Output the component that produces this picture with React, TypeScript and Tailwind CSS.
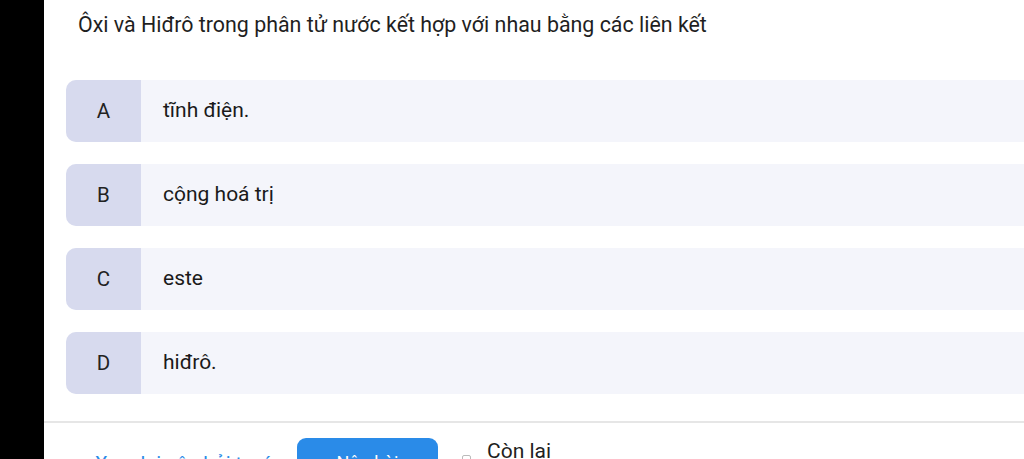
const options = [
  { key: "A", text: "tĩnh điện." },
  { key: "B", text: "cộng hoá trị" },
  { key: "C", text: "este" },
  { key: "D", text: "hiđrô." },
];

export default function App() {
  return (
    <div className="flex h-[459px] w-[1024px] overflow-hidden bg-black font-['Roboto',sans-serif]">
      <div className="w-[44px] shrink-0 bg-black" />
      <div className="flex flex-1 flex-col overflow-hidden bg-white">
        <p className="mt-[11px] shrink-0 pl-[34px] text-[21.4px] leading-[28px] text-[#1f1f1f]">
          Ôxi và Hiđrô trong phân tử nước kết hợp với nhau bằng các liên kết
        </p>

        <div className="mt-[41px] flex shrink-0 flex-col gap-[22px] pl-[22px]">
          {options.map((o) => (
            <div
              key={o.key}
              className="flex h-[62px] w-[1000px] shrink-0 items-center rounded-l-[10px] bg-[#f4f5fb]"
            >
              <div className="flex h-full w-[75px] items-center justify-center rounded-l-[10px] bg-[#d7daee] text-[20.5px] text-[#222]">
                {o.key}
              </div>
              <span className="pl-[22px] text-[21px] text-[#1a1a1a]">{o.text}</span>
            </div>
          ))}
        </div>

        <div className="mt-[27px] h-[2px] w-full shrink-0 bg-[#e6e6e6]" />

        <div className="flex shrink-0 items-start pt-[15px]">
          <span className="ml-[51px] mt-[11px] w-[175px] whitespace-nowrap text-[20px] text-[#2a8be8]">
            Xem lại câu hỏi trước
          </span>
          <div className="ml-[27px] flex h-[44px] w-[141px] items-start justify-center rounded-[9px] bg-[#2a8be8] pt-[11px] text-[18px] text-white">
            Nộp bài
          </div>
          <div className="ml-[24px] mt-[17px] h-[10px] w-[9px] rounded-[2px] border border-[#bbb]" />
          <span className="ml-[16px] mt-[-2px] text-[21px] text-[#1f1f1f]">Còn lại</span>
        </div>
      </div>
    </div>
  );
}
